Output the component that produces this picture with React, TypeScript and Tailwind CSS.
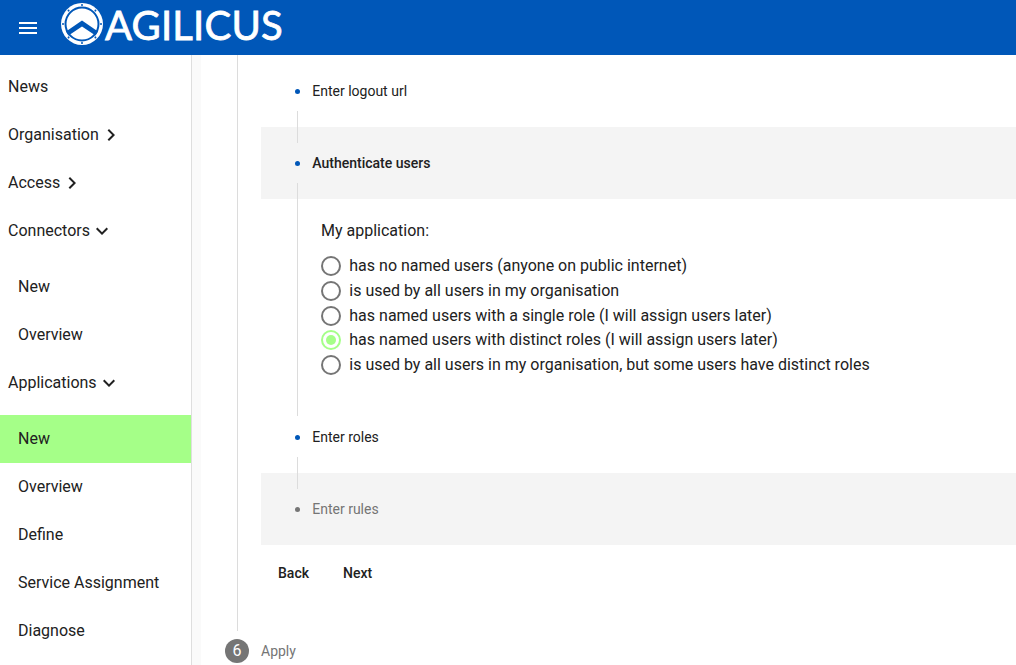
import { MdMenu, MdChevronRight, MdKeyboardArrowDown } from "react-icons/md";

const navItems = [
  { label: "News", depth: 0 },
  { label: "Organisation", depth: 0, arrow: "right" },
  { label: "Access", depth: 0, arrow: "right" },
  { label: "Connectors", depth: 0, arrow: "down" },
  { label: "New", depth: 1, gap: true },
  { label: "Overview", depth: 1 },
  { label: "Applications", depth: 0, arrow: "down" },
  { label: "New", depth: 1, gap: true, active: true },
  { label: "Overview", depth: 1 },
  { label: "Define", depth: 1 },
  { label: "Service Assignment", depth: 1 },
  { label: "Diagnose", depth: 1 },
];

const radioOptions = [
  "has no named users (anyone on public internet)",
  "is used by all users in my organisation",
  "has named users with a single role (I will assign users later)",
  "has named users with distinct roles (I will assign users later)",
  "is used by all users in my organisation, but some users have distinct roles",
];

function Logo() {
  const notches = [0, 45, 90, 135, 180, 225, 270, 315];
  return (
    <svg width="44" height="44" viewBox="0 0 44 44" className="mb-[8px] shrink-0">
      <circle cx="22" cy="22" r="21" fill="#fff" />
      <circle cx="22" cy="22" r="16.5" fill="none" stroke="#0057b8" strokeWidth="2" />
      {notches.map((a) => (
        <circle key={a} cx="22" cy="3" r="1" fill="#0057b8" transform={`rotate(${a} 22 22)`} />
      ))}
      <path d="M6 29.5 L22 18.5 L38 29.5 L35.5 33.5 L22 24.5 L8.5 33.5 Z" fill="#0057b8" />
    </svg>
  );
}

function Sidebar() {
  return (
    <nav className="w-[192px] shrink-0 border-r border-[#dedede] pt-[8px] text-[16px] text-[#212121]">
      {navItems.map((item, i) => (
        <div
          key={i}
          className={`flex h-12 items-center ${item.depth ? "pl-[18px]" : "pl-2"} ${item.gap ? "mt-2" : ""} ${item.active ? "bg-[#a5ff88]" : ""}`}
        >
          <span>{item.label}</span>
          {item.arrow === "right" && <MdChevronRight size={24} />}
          {item.arrow === "down" && <MdKeyboardArrowDown size={24} />}
        </div>
      ))}
    </nav>
  );
}

function SubStep({ label, bold, muted, shaded, line }: { label: string; bold?: boolean; muted?: boolean; shaded?: boolean; line?: number }) {
  return (
    <div className={`relative flex h-[72px] items-center pl-[34px] text-[14px] ${shaded ? "bg-[#f4f4f4]" : ""}`}>
      <span className={`h-[5px] w-[5px] rounded-full ${muted ? "bg-[#757575]" : "bg-[#0057b8]"}`} />
      <span className={`ml-[12.25px] ${bold ? "font-medium text-[#212121]" : muted ? "text-[#757575]" : "text-[#212121]"}`}>{label}</span>
      {line ? <span className="absolute left-[36px] top-[56px] z-10 w-px bg-[#dcdcdc]" style={{ height: line }} /> : null}
    </div>
  );
}

function Radio({ label, checked }: { label: string; checked?: boolean }) {
  return (
    <div className="flex h-[24.6px] items-center text-[16px] text-[#212121]">
      <span className={`flex h-5 w-5 items-center justify-center rounded-full border-2 ${checked ? "border-[#a5ff88]" : "border-[#757575]"}`}>
        {checked && <span className="h-[10px] w-[10px] rounded-full bg-[#a5ff88]" />}
      </span>
      <span className="ml-2 pl-[0.3px]">{label}</span>
    </div>
  );
}

export default function App() {
  return (
    <div className="flex h-screen flex-col overflow-hidden bg-white" style={{ fontFamily: "Roboto, sans-serif" }}>
      <header className="flex h-[55px] shrink-0 items-center bg-[#0057b8] pl-4 text-white">
        <MdMenu size={24} />
        <div className="ml-[20px] flex items-center">
          <Logo />
          <span className="mb-[5px] ml-[1px] text-[40px] leading-none tracking-[0.2px] [-webkit-text-stroke:0.8px_white]" style={{ fontFamily: "Lato, sans-serif" }}>
            AGILICUS
          </span>
        </div>
      </header>

      <div className="flex min-h-0 flex-1">
        <Sidebar />
        <div className="w-[9px] shrink-0 bg-[#fafafa]" />
        <main className="min-w-0 flex-1">
          <div className="ml-9 h-[576px] border-l border-[#dcdcdc] pl-[23px]">
            <SubStep label="Enter logout url" line={32} />
            <SubStep label="Authenticate users" bold shaded line={233} />
            <div className="h-[202px] pl-[60px] pt-[20px]">
              <p className="mb-[11.15px] text-[16px] leading-6 text-[#212121]">My application:</p>
              {radioOptions.map((opt, i) => (
                <Radio key={opt} label={opt} checked={i === 3} />
              ))}
            </div>
            <SubStep label="Enter roles" line={32} />
            <SubStep label="Enter rules" muted shaded />
            <div className="flex pt-[10px] text-[14px] font-medium text-[#212121]">
              <button className="h-9 px-[17px]">Back</button>
              <button className="h-9 pl-[17px] pr-4">Next</button>
            </div>
          </div>
          <div className="ml-[24px] mt-2 flex items-center">
            <span className="flex h-6 w-6 items-center justify-center rounded-full bg-[#757575] text-[16px] text-white">6</span>
            <span className="ml-3 text-[14px] text-[#757575]">Apply</span>
          </div>
        </main>
      </div>
    </div>
  );
}
